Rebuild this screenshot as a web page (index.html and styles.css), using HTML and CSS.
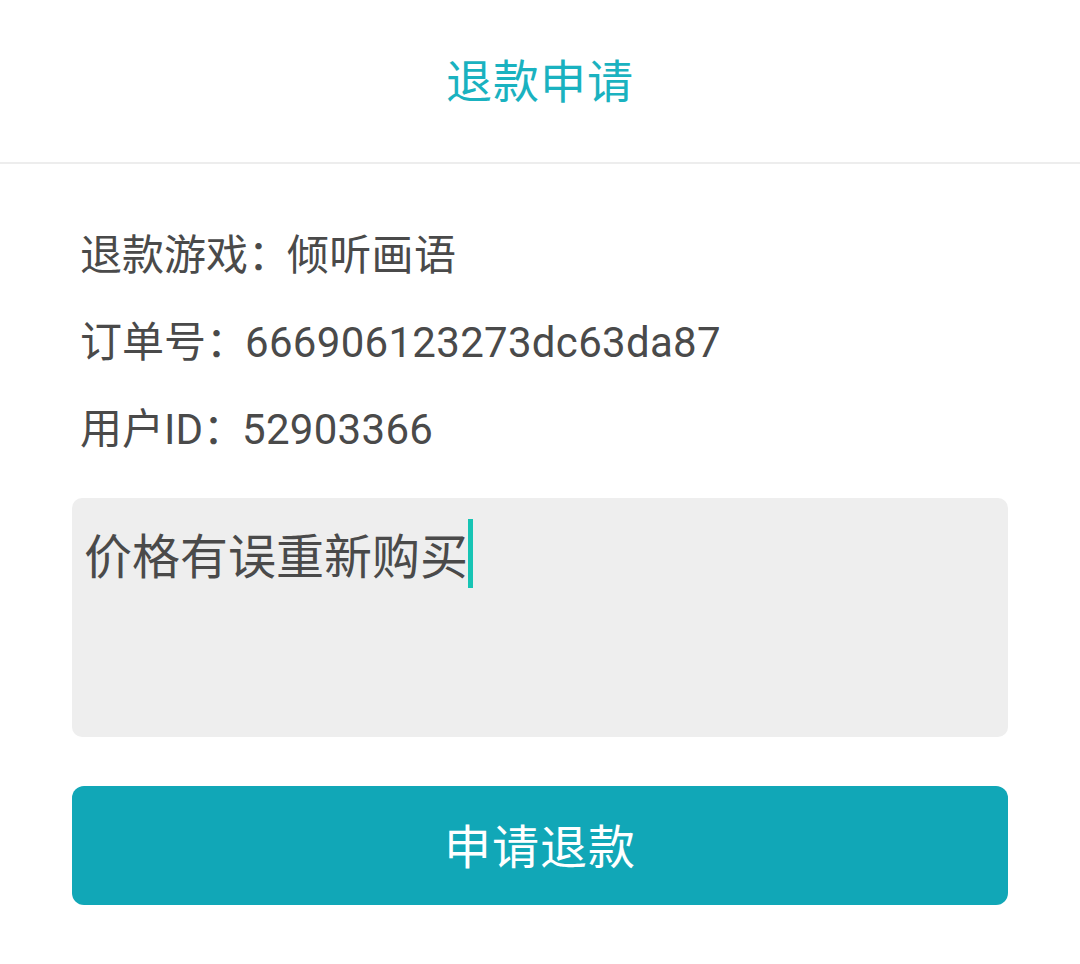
FILE: index.html
```html
<!DOCTYPE html>
<html lang="zh-CN">
<head>
<meta charset="utf-8">
<title>退款申请</title>
<link rel="stylesheet" href="styles.css">
</head>
<body>
<header class="topbar">
  <h1 class="title">退款申请</h1>
</header>
<main class="content">
  <div class="info">
    <div class="row">退款游戏：<span class="val">倾听画语</span></div>
    <div class="row">订单号：<span class="val">666906123273dc63da87</span></div>
    <div class="row">用户ID：<span class="val">52903366</span></div>
  </div>
  <div class="reason"><span class="reason-text">价格有误重新购买</span><span class="caret"></span></div>
  <button class="submit" type="button">申请退款</button>
</main>
</body>
</html>
```

FILE: styles.css
```css
html, body {
  margin: 0;
  padding: 0;
  background: #ffffff;
}
body {
  font-family: Roboto, "Noto Sans CJK SC", sans-serif;
  color: #4a4a4a;
}
.topbar {
  height: 162px;
  border-bottom: 2px solid #ededed;
  display: flex;
  align-items: center;
  justify-content: center;
}
.title {
  margin: 0 0 6px;
  font-weight: 400;
  font-size: 46px;
  color: #1ab2c0;
  letter-spacing: 1px;
}
.content {
  padding: 48px 72px 0;
}
.info {
  padding-left: 8px;
}
.row {
  font-size: 42px;
  line-height: 87px;
  white-space: nowrap;
}
.val {
  margin-left: -3px;
  letter-spacing: 0.3px;
}
.reason {
  margin-top: 25px;
  height: 239px;
  box-sizing: border-box;
  background: #eeeeee;
  border-radius: 10px;
  padding: 21px 12px 0;
  display: flex;
  align-items: flex-start;
}
.reason-text {
  font-size: 48px;
  line-height: 69px;
  color: #4a4a4a;
  padding-top: 4px;
}
.caret {
  width: 5px;
  height: 69px;
  background: #17c4b4;
}
.submit {
  display: flex;
  align-items: center;
  justify-content: center;
  width: 100%;
  margin-top: 49px;
  height: 119px;
  border: 0;
  border-radius: 12px;
  background: #11a7b7;
  color: #ffffff;
  font-family: Roboto, "Noto Sans CJK SC", sans-serif;
  font-size: 47px;
  letter-spacing: 1px;
  padding: 0 0 4px;
}
```
